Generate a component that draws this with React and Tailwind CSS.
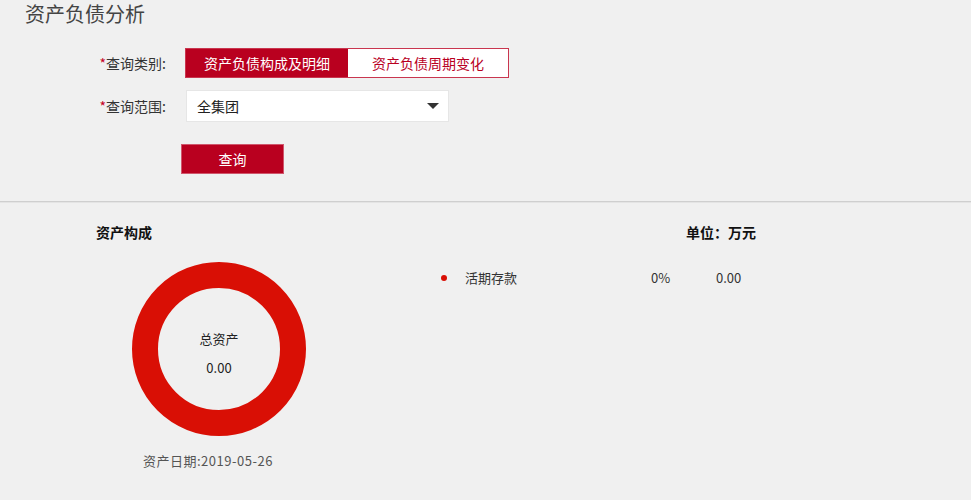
import React, { useState } from 'react';

const font = { fontFamily: '"Microsoft YaHei", "Noto Sans CJK SC", "Noto Sans", sans-serif' };

export default function App() {
  const [tab, setTab] = useState(0);

  const items = [{ name: '活期存款', pct: '0%', value: '0.00' }];

  return (
    <div className="w-[971px] h-[500px] bg-[#f0f0f0] text-[#333] overflow-hidden" style={font}>
      {/* 标题 */}
      <div className="pl-[25px] pt-[1px] text-[20px] leading-[26px] text-[#444]">资产负债分析</div>

      {/* 查询条件 */}
      <div className="pt-[21px] pb-[27px]">
        <div className="flex items-center h-[30px]">
          <div className="w-[176px] pr-[10px] text-right text-[14px] text-[#333]">
            <span className="text-[#c40025]">*</span>查询类别:
          </div>
          <div className="flex ml-[9px] h-[30px] border border-[#c9364f]">
            <button
              onClick={() => setTab(0)}
              className={
                tab === 0
                  ? 'w-[162px] h-full bg-[#b9001f] text-white text-[14px]'
                  : 'w-[162px] h-full bg-white text-[#b9001f] text-[14px]'
              }
            >
              资产负债构成及明细
            </button>
            <button
              onClick={() => setTab(1)}
              className={
                tab === 1
                  ? 'w-[160px] h-full bg-[#b9001f] text-white text-[14px]'
                  : 'w-[160px] h-full bg-white text-[#b9001f] text-[14px]'
              }
            >
              资产负债周期变化
            </button>
          </div>
        </div>

        <div className="flex items-center h-[32px] mt-[12px]">
          <div className="w-[176px] pr-[10px] text-right text-[14px] text-[#333]">
            <span className="text-[#c40025]">*</span>查询范围:
          </div>
          <div className="ml-[10px] w-[263px] h-[32px] bg-white border border-[#e6e6e6] flex items-center justify-between pl-[10px] pr-[9px] text-[14px] text-[#222]">
            <span>全集团</span>
            <svg width="12" height="8" viewBox="0 0 12 8">
              <path d="M0 1h12L6 7z" fill="#333" />
            </svg>
          </div>
        </div>

        <div className="mt-[22px] pl-[181px]">
          <button className="w-[103px] h-[30px] bg-[#b9001f] text-white text-[14px] border border-[#d0566c]">查询</button>
        </div>
      </div>

      <div className="h-[2px] bg-[#cfcfcf] border-b border-[#e4e4e4]" />

      {/* 资产构成 */}
      <div className="pl-[96px] pt-[19px]">
        <div className="w-[660px] flex justify-between text-[14px] font-bold text-[#111] leading-[20px]">
          <span>资产构成</span>
          <span>单位：万元</span>
        </div>

        <div className="flex mt-[20px]">
          <div className="w-[340px] flex flex-col">
            <div className="ml-[36px] w-[174px] h-[174px] rounded-full border-[26px] border-[#d90f05] flex flex-col items-center justify-center pt-[8px] text-[13px] text-[#222]">
              <span className="leading-[18px]">总资产</span>
              <span className="mt-[11px] leading-[18px]">0.00</span>
            </div>
            <div className="ml-[47px] mt-[15px] text-[13px] tracking-[0.5px] text-[#555]">资产日期:2019-05-26</div>
          </div>

          <div className="pt-[6px]">
            {items.map((item, i) => (
              <div key={i} className="flex items-center h-[20px] text-[13px] text-[#333]">
                <span className="ml-[5px] w-[6px] h-[6px] rounded-full bg-[#d90f05]" />
                <span className="ml-[18px] w-[186px]">{item.name}</span>
                <span className="w-[65px]">{item.pct}</span>
                <span>{item.value}</span>
              </div>
            ))}
          </div>
        </div>
      </div>
    </div>
  );
}
